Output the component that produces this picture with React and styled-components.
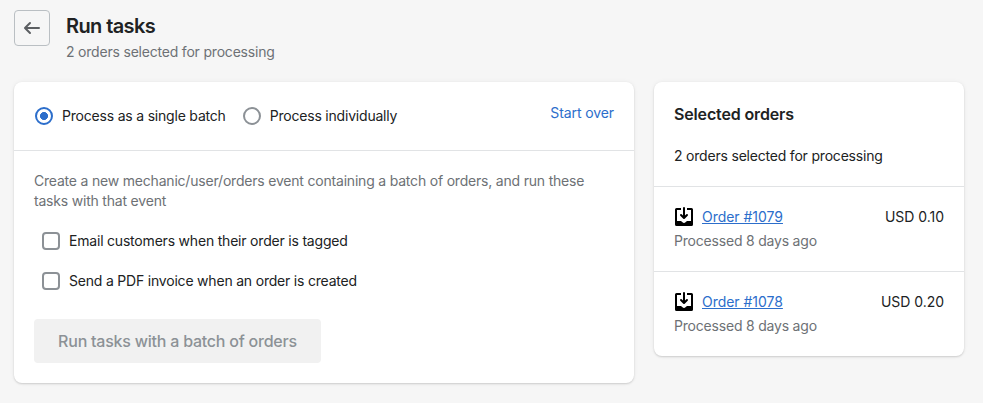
import React from "react";
import styled, { createGlobalStyle } from "styled-components";

const GlobalStyle = createGlobalStyle`
  * { box-sizing: border-box; }
  body {
    margin: 0;
    background: #f6f6f6;
    color: #202223;
    font: 400 14px/20px Inter, sans-serif;
    letter-spacing: -0.2px;
  }
  h1, h2, p { margin: 0; }
`;

const Page = styled.main`
  padding: 10px 19px 20px 14px;
`;

const Header = styled.header`
  display: flex;
  gap: 16px;
  height: 72px;
`;

const BackButton = styled.button`
  display: flex;
  align-items: center;
  justify-content: center;
  width: 36px;
  height: 36px;
  padding: 0;
  border: 1px solid #babfc3;
  border-radius: 4px;
  background: transparent;

  svg { display: block; fill: #5c5f62; }
`;

const Title = styled.h1`
  padding-top: 2px;
  font-size: 20px;
  line-height: 28px;
  font-weight: 600;
  letter-spacing: -0.6px;
`;

const Text = styled.p`
  color: ${(p) => (p.$subdued ? "#6d7175" : "#202223")};
  margin-top: ${(p) => p.$top || 0}px;
`;

const Layout = styled.div`
  display: grid;
  grid-template-columns: 620px 310px;
  gap: 20px;
  align-items: start;
`;

const Card = styled.section`
  background: #fff;
  border-radius: 8px;
  box-shadow: 0 0 5px rgba(23, 24, 24, 0.05), 0 1px 2px rgba(0, 0, 0, 0.15);
`;

const ModeBar = styled.div`
  display: flex;
  align-items: flex-start;
  height: 68px;
  padding: 21px 20px 0;
`;

const Choice = styled.label`
  display: flex;
  align-items: center;
  gap: 9px;
  height: 26px;
  margin-right: 16px;
`;

const Radio = styled.input`
  appearance: none;
  flex: none;
  width: 18px;
  height: 18px;
  margin: 0 0 0 1px;
  border: 2px solid #8c9196;
  border-radius: 50%;

  &:checked {
    border-color: #2c6ecb;
    background: radial-gradient(circle, #2c6ecb 3.7px, transparent 4.3px);
  }
`;

const Checkbox = styled.input`
  appearance: none;
  flex: none;
  width: 18px;
  height: 18px;
  margin: 0;
  border: 2px solid #8c9196;
  border-radius: 4px;
`;

const StartOver = styled.a`
  margin-left: auto;
  color: #2c6ecb;
  letter-spacing: -0.1px;
`;

const BatchForm = styled.div`
  height: 233px;
  padding: 20px;
  border-top: 1px solid #e1e3e5;
`;

const TaskList = styled.div`
  display: flex;
  flex-direction: column;
  gap: 14px;
  padding: 17px 8px 0;
`;

const RunButton = styled.button`
  display: block;
  width: 287px;
  height: 44px;
  margin-top: 25px;
  padding: 0;
  border: 0;
  border-radius: 4px;
  background: #f1f1f1;
  color: #8c9196;
  font: 500 16px/20px Inter, sans-serif;
  letter-spacing: -0.23px;
`;

const Summary = styled.div`
  height: 104px;
  padding: 20px;
`;

const CardTitle = styled.h2`
  font-size: 16px;
  line-height: 24px;
  font-weight: 600;
  letter-spacing: -0.15px;
`;

const OrderRow = styled.article`
  height: 85px;
  padding: 20px;
  border-top: 1px solid #e1e3e5;
`;

const OrderLine = styled.div`
  display: flex;
  align-items: center;
  height: 20px;
  letter-spacing: -0.03px;

  svg { flex: none; margin-right: 8px; }
`;

const OrderLink = styled.a`
  color: #2c6ecb;
  text-decoration: underline;
`;

const Amount = styled.span`
  margin-left: auto;
`;

const ArrowLeftIcon = () => (
  <svg width="20" height="20" viewBox="0 0 20 20" aria-hidden="true">
    <path d="M17 9H5.414l3.293-3.293a.999.999 0 1 0-1.414-1.414l-5 5a.999.999 0 0 0 0 1.414l5 5a.997.997 0 0 0 1.414 0 .999.999 0 0 0 0-1.414L5.414 11H17a1 1 0 1 0 0-2z" />
  </svg>
);

const OrderIcon = () => (
  <svg width="20" height="20" viewBox="0 0 20 20" aria-hidden="true">
    <path d="M11 1a1 1 0 1 0-2 0v7.586L7.707 7.293a1 1 0 0 0-1.414 1.414l3 3a1 1 0 0 0 1.414 0l3-3a1 1 0 0 0-1.414-1.414L11 8.586V1z" />
    <path d="M3 14V3h4V1H2.5A1.5 1.5 0 0 0 1 2.5v15A1.5 1.5 0 0 0 2.5 19h15a1.5 1.5 0 0 0 1.5-1.5v-15A1.5 1.5 0 0 0 17.5 1H13v2h4v11h-3.5c-.775 0-1.388.662-1.926 1.244l-.11.12A1.994 1.994 0 0 1 10 16a1.994 1.994 0 0 1-1.463-.637l-.111-.12C7.888 14.664 7.275 14 6.5 14H3z" />
  </svg>
);

const tasks = [
  "Email customers when their order is tagged",
  "Send a PDF invoice when an order is created",
];

const orders = [
  { name: "Order #1079", amount: "USD 0.10" },
  { name: "Order #1078", amount: "USD 0.20" },
];

export default function App() {
  return (
    <Page>
      <GlobalStyle />
      <Header>
        <BackButton aria-label="Back"><ArrowLeftIcon /></BackButton>
        <div>
          <Title>Run tasks</Title>
          <Text $subdued $top={2}>2 orders selected for processing</Text>
        </div>
      </Header>
      <Layout>
        <Card>
          <ModeBar>
            <Choice><Radio type="radio" name="mode" defaultChecked />Process as a single batch</Choice>
            <Choice><Radio type="radio" name="mode" />Process individually</Choice>
            <StartOver>Start over</StartOver>
          </ModeBar>
          <BatchForm>
            <Text $subdued>
              Create a new mechanic/user/orders event containing a batch of orders, and run these tasks with that event
            </Text>
            <TaskList>
              {tasks.map((task) => (
                <Choice key={task}><Checkbox type="checkbox" />{task}</Choice>
              ))}
            </TaskList>
            <RunButton disabled>Run tasks with a batch of orders</RunButton>
          </BatchForm>
        </Card>
        <Card>
          <Summary>
            <CardTitle>Selected orders</CardTitle>
            <Text $top={20}>2 orders selected for processing</Text>
          </Summary>
          {orders.map((order) => (
            <OrderRow key={order.name}>
              <OrderLine>
                <OrderIcon />
                <OrderLink>{order.name}</OrderLink>
                <Amount>{order.amount}</Amount>
              </OrderLine>
              <Text $subdued $top={4}>Processed 8 days ago</Text>
            </OrderRow>
          ))}
        </Card>
      </Layout>
    </Page>
  );
}
